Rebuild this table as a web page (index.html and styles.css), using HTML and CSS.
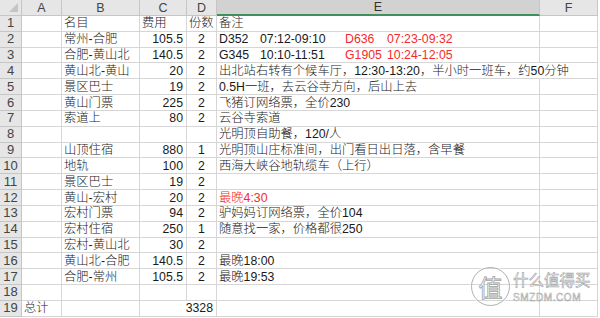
FILE: index.html
```html
<!DOCTYPE html>
<html lang="zh-CN">
<head>
<meta charset="utf-8">
<title>Sheet</title>
<link rel="stylesheet" href="styles.css">
</head>
<body>
<div class="sheet">
  <div class="hd corner"><span class="tri"></span></div>
  <div class="hd col">A</div>
  <div class="hd col">B</div>
  <div class="hd col">C</div>
  <div class="hd col">D</div>
  <div class="hd col sel">E</div>
  <div class="hd col">F</div>

  <div class="hd rn">1</div><div class="c"></div><div class="c">名目</div><div class="c">费用</div><div class="c">份数</div><div class="c">备注</div><div class="c"></div>

  <div class="hd rn">2</div><div class="c"></div><div class="c">常州-合肥</div><div class="c num">105.5</div><div class="c mid">2</div><div class="c"><span class="code">D352</span><span class="time">07:12-09:10</span><span class="red"><span class="code2">D636</span>07:23-09:32</span></div><div class="c"></div>

  <div class="hd rn">3</div><div class="c"></div><div class="c">合肥-黄山北</div><div class="c num">140.5</div><div class="c mid">2</div><div class="c"><span class="code">G345</span><span class="time">10:10-11:51</span><span class="red"><span class="code2">G1905</span>10:24-12:05</span></div><div class="c"></div>

  <div class="hd rn">4</div><div class="c"></div><div class="c">黄山北-黄山</div><div class="c num">20</div><div class="c mid">2</div><div class="c over">出北站右转有个候车厅，12:30-13:20，半小时一班车，约50分钟</div><div class="c"></div>

  <div class="hd rn">5</div><div class="c"></div><div class="c">景区巴士</div><div class="c num">19</div><div class="c mid">2</div><div class="c">0.5H一班，去云谷寺方向，后山上去</div><div class="c"></div>

  <div class="hd rn">6</div><div class="c"></div><div class="c">黄山门票</div><div class="c num">225</div><div class="c mid">2</div><div class="c">飞猪订网络票，全价230</div><div class="c"></div>

  <div class="hd rn">7</div><div class="c"></div><div class="c">索道上</div><div class="c num">80</div><div class="c mid">2</div><div class="c">云谷寺索道</div><div class="c"></div>

  <div class="hd rn">8</div><div class="c"></div><div class="c"></div><div class="c"></div><div class="c"></div><div class="c">光明顶自助餐，120/人</div><div class="c"></div>

  <div class="hd rn">9</div><div class="c"></div><div class="c">山顶住宿</div><div class="c num">880</div><div class="c mid">1</div><div class="c">光明顶山庄标准间，出门看日出日落，含早餐</div><div class="c"></div>

  <div class="hd rn">10</div><div class="c"></div><div class="c">地轨</div><div class="c num">100</div><div class="c mid">2</div><div class="c">西海大峡谷地轨缆车（上行）</div><div class="c"></div>

  <div class="hd rn">11</div><div class="c"></div><div class="c">景区巴士</div><div class="c num">19</div><div class="c mid">2</div><div class="c"></div><div class="c"></div>

  <div class="hd rn">12</div><div class="c"></div><div class="c">黄山-宏村</div><div class="c num">20</div><div class="c mid">2</div><div class="c red">最晚4:30</div><div class="c"></div>

  <div class="hd rn">13</div><div class="c"></div><div class="c">宏村门票</div><div class="c num">94</div><div class="c mid">2</div><div class="c">驴妈妈订网络票，全价104</div><div class="c"></div>

  <div class="hd rn">14</div><div class="c"></div><div class="c">宏村住宿</div><div class="c num">250</div><div class="c mid">1</div><div class="c">随意找一家，价格都很250</div><div class="c"></div>

  <div class="hd rn">15</div><div class="c"></div><div class="c">宏村-黄山北</div><div class="c num">30</div><div class="c mid">2</div><div class="c"></div><div class="c"></div>

  <div class="hd rn">16</div><div class="c"></div><div class="c">黄山北-合肥</div><div class="c num">140.5</div><div class="c mid">2</div><div class="c">最晚18:00</div><div class="c"></div>

  <div class="hd rn">17</div><div class="c"></div><div class="c">合肥-常州</div><div class="c num">105.5</div><div class="c mid">2</div><div class="c">最晚19:53</div><div class="c"></div>

  <div class="hd rn">18</div><div class="c"></div><div class="c"></div><div class="c"></div><div class="c"></div><div class="c"></div><div class="c"></div>

  <div class="hd rn">19</div><div class="c">总计</div><div class="c"></div><div class="c nob"></div><div class="c num">3328</div><div class="c"></div><div class="c"></div>
</div>

<div class="watermark">
  <div class="wm-logo">值</div>
  <div class="wm-text">
    <div class="wm-cn">什么值得买</div>
    <div class="wm-en">SMZDM.COM</div>
  </div>
</div>
</body>
</html>
```

FILE: styles.css
```css
html, body {
  margin: 0;
  padding: 0;
  background: #fff;
}

body {
  width: 600px;
  height: 318px;
  overflow: hidden;
  position: relative;
  font-family: "Liberation Sans", "Noto Sans CJK SC", sans-serif;
}

.sheet {
  display: grid;
  grid-template-columns: 22px 40px 78px 47px 30px 323px 58px;
  grid-template-rows: 16px repeat(19, 15.84px);
  font-size: 12.3px;
  color: #1a1a1a;
}

.c {
  box-sizing: border-box;
  border-right: 1px solid #d6d6d6;
  border-bottom: 1px solid #d6d6d6;
  padding: 0 2px;
  display: flex;
  align-items: center;
  white-space: pre;
  overflow: visible;
  line-height: 14px;
  font-weight: 300;
}

.c.num {
  justify-content: flex-end;
  padding-right: 3px;
}

.c.mid {
  justify-content: center;
}

.c.over {
  border-right-color: transparent;
}

.c.nob {
  border-right-color: transparent;
}

.hd {
  box-sizing: border-box;
  background: #e6e6e6;
  color: #444;
  border-right: 1px solid #c6c6c6;
  border-bottom: 1px solid #c6c6c6;
  display: flex;
  align-items: center;
  justify-content: center;
  font-family: "Liberation Sans", sans-serif;
  font-size: 12.5px;
  line-height: 14px;
}

.hd.rn {
  font-size: 13px;
}

.hd.sel {
  background: #d2d2d2;
  border-bottom: 2px solid #3f8f5f;
  color: #333;
}

.corner {
  position: relative;
}

.tri {
  position: absolute;
  right: 3px;
  bottom: 3px;
  width: 0;
  height: 0;
  border-left: 9px solid transparent;
  border-bottom: 9px solid #c4c4c4;
}

.code {
  display: inline-block;
  width: 41px;
}

.time {
  display: inline-block;
  width: 85px;
}

.code2 {
  display: inline-block;
  width: 42px;
}

.red {
  color: #f52a2a;
}

.watermark {
  position: absolute;
  left: 471px;
  top: 267px;
  display: flex;
  align-items: center;
  gap: 3px;
  color: rgba(255, 255, 255, 0.85);
  font-family: "Noto Sans CJK SC", sans-serif;
}

.wm-logo {
  box-sizing: border-box;
  width: 39px;
  height: 39px;
  border-radius: 50%;
  border: 1.5px solid #b0b0b0;
  box-shadow: 0 0 0 1px rgba(255,255,255,0.8);
  display: flex;
  align-items: center;
  justify-content: center;
  font-size: 24px;
  line-height: 1;
  color: rgba(255,255,255,0.9);
  -webkit-text-stroke: 0.8px #a4a4a4;
}

.wm-text {
  display: flex;
  flex-direction: column;
  align-items: flex-start;
}

.wm-cn {
  font-size: 15.5px;
  line-height: 20px;
  -webkit-text-stroke: 0.6px #a4a4a4;
}

.wm-en {
  font-family: "Liberation Sans", sans-serif;
  font-size: 10px;
  line-height: 14px;
  letter-spacing: 0.6px;
  -webkit-text-stroke: 0.5px #a4a4a4;
  margin-top: 2px;
}
```
